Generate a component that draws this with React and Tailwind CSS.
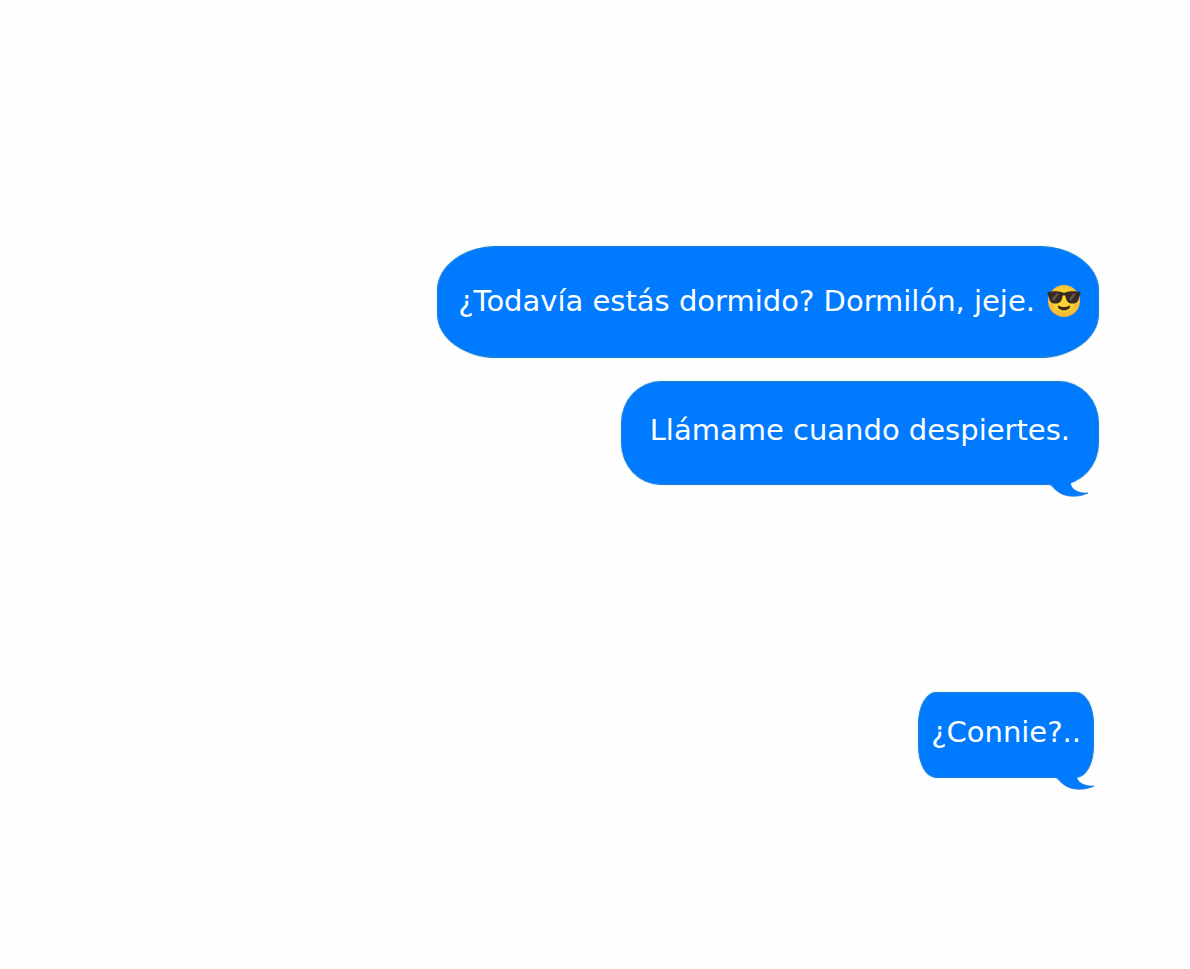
function SunglassesEmoji() {
  return (
    <svg
      className="h-[34px] w-[34px] shrink-0"
      viewBox="0 0 34 34"
      role="img"
      aria-label="😎"
    >
      <defs>
        <radialGradient id="face" cx="0.5" cy="0.45" r="0.55">
          <stop offset="0.5" stopColor="#fdd32f" />
          <stop offset="1" stopColor="#f5b43c" />
        </radialGradient>
      </defs>
      <circle cx="17" cy="17" r="16" fill="url(#face)" />
      <path
        d="M0.5 8 C5 7 12 7 15 8.300 C16.300 8.800 17.700 8.800 19 8.300 C22 7 29 7 33.500 8 L33.300 10.800 C32.600 11.300 32.300 12 32 13.500 C31.300 17.900 29.500 19.600 25.800 19.600 C21.500 19.600 19.600 17.500 18.800 13.500 C18.500 11.800 18 11.200 17 11.200 C16 11.200 15.500 11.800 15.200 13.500 C14.400 17.500 12.500 19.600 8.200 19.600 C4.500 19.600 2.700 17.900 2 13.500 C1.700 12 1.400 11.300 0.700 10.800 Z"
        fill="#352a25"
      />
      <path
        d="M5 15 L9.500 9.500 L12 9.700 L6.800 17 Z M22 15 L26.500 9.500 L29 9.700 L23.800 17 Z"
        fill="#6d5848"
      />
      <path
        d="M11.800 21.800 C14.500 23.500 19.500 23.500 22.200 21.800 C23 21.500 23.500 22.200 23 23.200 C21.800 25.400 19.500 26.300 17 26.300 C14.500 26.300 12.200 25.400 11 23.200 C10.500 22.200 11 21.500 11.800 21.800 Z"
        fill="#3a2b1c"
      />
    </svg>
  );
}

function Tail({ className }) {
  return (
    <svg
      className={`absolute top-full -mt-[5px] h-[18px] w-10 ${className}`}
      viewBox="0 0 40 18"
      aria-hidden="true"
    >
      <path
        d="M0 4 C5 9 10 16.800 23 17.200 C30 17.400 35 16 39 14 C30 14.500 22 11 21.500 4 L27 2 L24 0 L0 0 Z"
        fill="#007aff"
      />
      <path
        d="M0 4.500 C5 9 10 16.800 23 17.200 C30 17.400 35 16 39 14 C30 14.500 22 11 21.500 4"
        fill="none"
        stroke="#2a7fd2"
        strokeWidth="0.8"
      />
    </svg>
  );
}

function Bubble({ children, className, tail }) {
  return (
    <div
      className={`relative border border-[#2a7fd2] bg-[#007aff] text-[29px] leading-9 whitespace-nowrap text-white shadow-[0_0_2px_#a5ecff] ${className}`}
    >
      {children}
      {tail && <Tail className={tail} />}
    </div>
  );
}

export default function App() {
  return (
    <main className="flex min-h-screen flex-col items-end bg-[#fefefe] pt-[246px] pr-[91px] font-['DejaVu_Sans',sans-serif]">
      <Bubble className="flex items-center gap-3 rounded-[60px/44px] pt-9 pr-[17px] pb-[38px] pl-5">
        <p>¿Todavía estás dormido? Dormilón, jeje.</p>
        <SunglassesEmoji />
      </Bubble>

      <Bubble
        className="mt-[23px] rounded-[40px/42px] px-7 pt-[30px] pb-9"
        tail="right-[9px]"
      >
        <p>Llámame cuando despiertes.</p>
      </Bubble>

      <Bubble
        className="mt-[207px] mr-[5px] rounded-[18px/32px] px-3 pt-[21px] pb-[27px]"
        tail="-right-0.5"
      >
        <p>¿Connie?..</p>
      </Bubble>
    </main>
  );
}
